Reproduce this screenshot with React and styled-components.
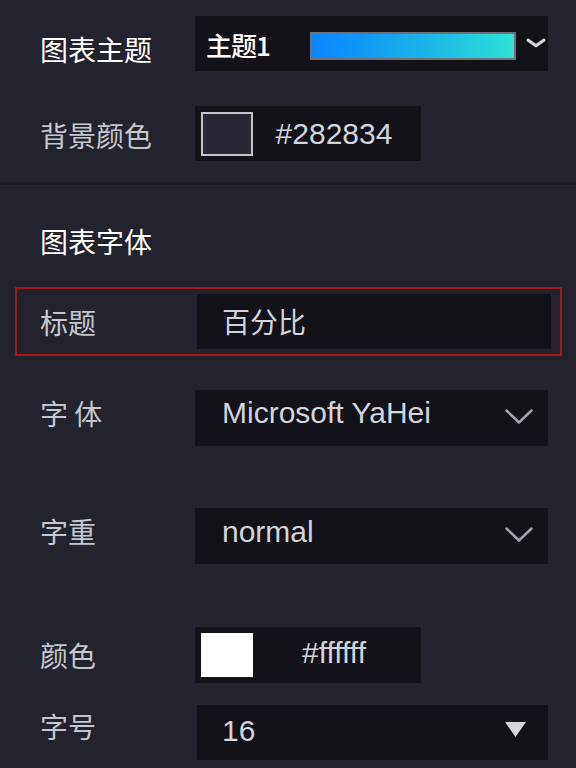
import React from "react";
import styled, { createGlobalStyle, css } from "styled-components";

const GlobalStyle = createGlobalStyle`
  html, body {
    margin: 0;
    padding: 0;
    background: #23232d;
  }
  body {
    font-family: "Liberation Sans", "Noto Sans CJK SC", sans-serif;
  }
`;

// nudges an item inside a centred flex row up or down by $dy pixels
const shift = css`
  ${(p) =>
    p.$dy > 0
      ? `margin-top: ${p.$dy * 2}px;`
      : p.$dy < 0
      ? `margin-bottom: ${-p.$dy * 2}px;`
      : ""}
`;

const Panel = styled.div`
  width: 576px;
  height: 768px;
  overflow: hidden;
  box-sizing: border-box;
  padding-top: 16px;
  background: #23232d;
  display: flex;
  flex-direction: column;
`;

const Row = styled.div`
  display: flex;
  align-items: center;
  padding: 0 28px 0 40px;
  margin-top: ${(p) => p.$gap || 0}px;
`;

const HighlightRow = styled(Row)`
  margin: ${(p) => p.$gap || 0}px 14px 0 15px;
  padding: 5px 9px 5px 23px;
  border: 2px solid #a8151c;
`;

const Label = styled.div`
  width: ${(p) => p.$width || 155}px;
  flex-shrink: 0;
  font-size: 28px;
  line-height: 30px;
  color: ${(p) => (p.$strong ? "#ffffff" : "#c4c7d0")};
  font-family: "Noto Sans CJK SC", sans-serif;
  white-space: pre;
  ${shift}
`;

const SectionTitle = styled.div`
  margin-top: 41px;
  padding-left: 40px;
  font-size: 28px;
  line-height: 30px;
  color: #ffffff;
  font-family: "Noto Sans CJK SC", sans-serif;
`;

const Divider = styled.div`
  margin-top: 21px;
  height: 3px;
  background: #1a1a21;
`;

const Field = styled.div`
  flex: 1;
  height: ${(p) => p.$h || 56}px;
  box-sizing: border-box;
  background: #121218;
  display: flex;
  align-items: center;
  padding: 0 ${(p) => p.$pr ?? 14}px 0 ${(p) => p.$pl ?? 27}px;
`;

const Value = styled.span`
  flex: 1;
  color: #d2d4dc;
  font-family: ${(p) =>
    p.$cjk
      ? `"Noto Sans CJK SC", sans-serif`
      : `"Liberation Sans", "Noto Sans CJK SC", sans-serif`};
  font-size: ${(p) => (p.$cjk ? 28 : 30)}px;
  ${shift}
`;

const ThemeName = styled.span`
  width: 104px;
  flex-shrink: 0;
  font-size: 26px;
  font-weight: 500;
  color: #ffffff;
  font-family: "Noto Sans CJK SC", sans-serif;
  letter-spacing: -1px;
  ${shift}
`;

const GradientBar = styled.div`
  width: 206px;
  height: 28px;
  box-sizing: border-box;
  border: 2px solid #6f7078;
  background: linear-gradient(90deg, #0a84ff 0%, #19b3e8 55%, #2ee3d6 100%);
  ${shift}
`;

const Arrow = styled.span`
  display: flex;
  margin-left: ${(p) => p.$ml || 0}px;
  ${shift}
`;

const ColorField = styled.div`
  width: 226px;
  height: ${(p) => p.$h || 56}px;
  box-sizing: border-box;
  background: #121218;
  display: flex;
  align-items: center;
  padding: 0 6px;
`;

const Swatch = styled.div`
  width: 52px;
  height: 44px;
  box-sizing: border-box;
  border: 2px solid ${(p) => (p.$color === "#ffffff" ? "#ffffff" : "#c3c3c8")};
  background: ${(p) => p.$color};
`;

const HexText = styled.span`
  flex: 1;
  text-align: center;
  font-size: 30px;
  color: #d2d4dc;
  font-family: "Liberation Sans", sans-serif;
  ${shift}
`;

const Chevron = ({ w = 30, h = 17, stroke = "#a3a4ab", sw = 2.5 }) => (
  <svg width={w} height={h} viewBox={`0 0 ${w} ${h}`} fill="none">
    <polyline
      points={`${sw},${sw} ${w / 2},${h - sw} ${w - sw},${sw}`}
      stroke={stroke}
      strokeWidth={sw}
      strokeLinecap="round"
      strokeLinejoin="round"
    />
  </svg>
);

const Triangle = () => (
  <svg width="21" height="15" viewBox="0 0 21 15">
    <polygon points="0,0 21,0 10.5,15" fill="#d6d7dc" />
  </svg>
);

export default function App() {
  return (
    <>
      <GlobalStyle />
      <Panel>
        <Row>
          <Label $strong $dy={5}>图表主题</Label>
          <Field $h={55} $pl={11} $pr={1}>
            <ThemeName $dy={1}>主题1</ThemeName>
            <GradientBar $dy={2} />
            <Arrow $ml={9} $dy={-1}>
              <Chevron w={22} h={12} stroke="#d4d4d8" sw={3.2} />
            </Arrow>
          </Field>
        </Row>
        <Row $gap={35}>
          <Label $dy={1}>背景颜色</Label>
          <ColorField $h={55}>
            <Swatch $color="#282834" />
            <HexText>#282834</HexText>
          </ColorField>
        </Row>
        <Divider />
        <SectionTitle>图表字体</SectionTitle>
        <HighlightRow $gap={31}>
          <Label $width={157}>标题</Label>
          <Field $h={55} $pl={25}>
            <Value $cjk $dy={-1}>百分比</Value>
          </Field>
        </HighlightRow>
        <Row $gap={34}>
          <Label $dy={-5}>{"字 体"}</Label>
          <Field>
            <Value $dy={-5}>Microsoft YaHei</Value>
            <Arrow $dy={-2}>
              <Chevron />
            </Arrow>
          </Field>
        </Row>
        <Row $gap={62}>
          <Label $dy={-5}>字重</Label>
          <Field>
            <Value $dy={-4}>normal</Value>
            <Arrow $dy={-2}>
              <Chevron />
            </Arrow>
          </Field>
        </Row>
        <Row $gap={63}>
          <Label>颜色</Label>
          <ColorField>
            <Swatch $color="#ffffff" />
            <HexText $dy={-2}>#ffffff</HexText>
          </ColorField>
        </Row>
        <Row $gap={22}>
          <Label $width={157} $dy={-7}>字号</Label>
          <Field $h={55} $pl={25} $pr={22}>
            <Value $dy={-2}>16</Value>
            <Arrow $dy={-3}>
              <Triangle />
            </Arrow>
          </Field>
        </Row>
      </Panel>
    </>
  );
}
